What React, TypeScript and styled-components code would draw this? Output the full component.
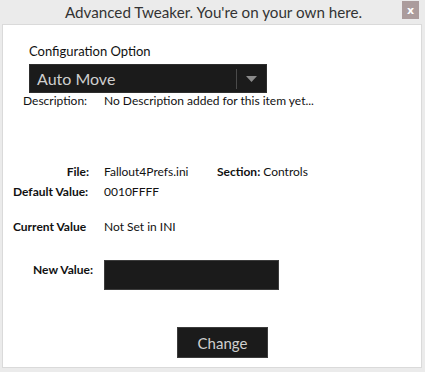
import React from "react";
import styled, { createGlobalStyle } from "styled-components";

const Global = createGlobalStyle`
  html, body { margin: 0; padding: 0; background: #ebebeb; }
  body { font-family: "Segoe UI", Lato, "Noto Sans", sans-serif; width: 425px; height: 372px; overflow: hidden; }
`;

const TitleBar = styled.div`
  height: 24px;
  display: flex;
  align-items: center;
  justify-content: center;
  position: relative;
  font-size: 15.2px;
  color: #333;
  padding-left: 2px;
`;

const Close = styled.div`
  position: absolute;
  right: 6px;
  top: 1px;
  width: 17px;
  height: 18px;
  background: #ab9c9c;
  color: #fff;
  font: bold 11px "DejaVu Sans", sans-serif;
  display: flex;
  align-items: center;
  justify-content: center;
`;

const Frame = styled.div`
  margin: 0 3px 0 2px;
  height: 344px;
  border: 1px solid #dadada;
  background: #fff;
  box-sizing: border-box;
  display: flex;
  flex-direction: column;
  color: #111;
  font-size: 12px;
`;

const OptionLabel = styled.div`
  margin: 16px 0 0 26px;
  font-size: 13px;
  line-height: 20px;
`;

const Combo = styled.div`
  margin: 3px 0 0 26px;
  width: 238px;
  height: 29px;
  box-sizing: border-box;
  border: 1px solid #2e2e2e;
  background: #1b1b1b;
  color: #cfcfcf;
  display: flex;
  align-items: center;
  font-size: 16px;
`;

const ComboText = styled.span`
  flex: 1;
  padding-left: 7px;
`;

const ComboSep = styled.span`
  width: 1px;
  height: 20px;
  background: #4a4a4a;
`;

const ComboArrow = styled.span`
  width: 29px;
  display: flex;
  justify-content: center;
  svg { display: block; }
`;

const Grid = styled.div`
  display: grid;
  grid-template-columns: 101px 1fr;
  align-items: center;
`;

const Label = styled.div<{ $align?: string; $bold?: boolean; $pl?: number; $pr?: number; $mt?: number }>`
  grid-column: 1;
  text-align: ${(p) => p.$align || "left"};
  font-weight: ${(p) => (p.$bold ? 700 : 400)};
  padding-left: ${(p) => p.$pl ?? 10}px;
  padding-right: ${(p) => p.$pr ?? 0}px;
  margin-top: ${(p) => p.$mt ?? 0}px;
  line-height: 16px;
  white-space: nowrap;
`;

const Value = styled.div<{ $mt?: number }>`
  grid-column: 2;
  margin-top: ${(p) => p.$mt ?? 0}px;
  line-height: 16px;
  display: flex;
  align-items: center;
  white-space: nowrap;
`;

const Inline = styled.span<{ $w?: number; $bold?: boolean }>`
  display: inline-block;
  width: ${(p) => (p.$w ? `${p.$w}px` : "auto")};
  font-weight: ${(p) => (p.$bold ? 700 : 400)};
`;

const FieldRow = styled.div`
  display: grid;
  grid-template-columns: 101px 1fr;
  align-items: start;
  margin-top: 25px;
`;

const Input = styled.div`
  width: 175px;
  height: 30px;
  box-sizing: border-box;
  border: 1px solid #3c3c3c;
  background: #1b1b1b;
`;

const ButtonRow = styled.div`
  display: flex;
  justify-content: center;
  margin-top: 37px;
  padding-left: 21px;
`;

const Button = styled.button`
  width: 91px;
  height: 31px;
  box-sizing: border-box;
  border: 1px solid #3c3c3c;
  background: #1b1b1b;
  color: #cfcfcf;
  font-family: inherit;
  font-size: 15px;
  padding: 0;
`;

export default function App() {
  return (
    <>
      <Global />
      <TitleBar>
        Advanced Tweaker. You're on your own here.
        <Close>x</Close>
      </TitleBar>
      <Frame>
        <OptionLabel>Configuration Option</OptionLabel>
        <Combo>
          <ComboText>Auto Move</ComboText>
          <ComboSep />
          <ComboArrow>
            <svg width="11" height="6" viewBox="0 0 11 6">
              <path d="M0 0 H11 L5.5 6 Z" fill="#8a8a8a" />
            </svg>
          </ComboArrow>
        </Combo>
        <Grid>
          <Label $pl={20}>Description:</Label>
          <Value>No Description added for this item yet...</Value>

          <Label $bold $align="right" $pr={15} $mt={55}>File:</Label>
          <Value $mt={55}>
            <Inline $w={113}>Fallout4Prefs.ini</Inline>
            <Inline $bold>Section:</Inline>
            <Inline>&nbsp;Controls</Inline>
          </Value>

          <Label $bold $mt={4}>Default Value:</Label>
          <Value $mt={4}>0010FFFF</Value>

          <Label $bold $mt={19}>Current Value</Label>
          <Value $mt={19}>Not Set in INI</Value>
        </Grid>
        <FieldRow>
          <Label $bold $align="right" $pr={11} $mt={2}>New Value:</Label>
          <Value>
            <Input />
          </Value>
        </FieldRow>
        <ButtonRow>
          <Button>Change</Button>
        </ButtonRow>
      </Frame>
    </>
  );
}
